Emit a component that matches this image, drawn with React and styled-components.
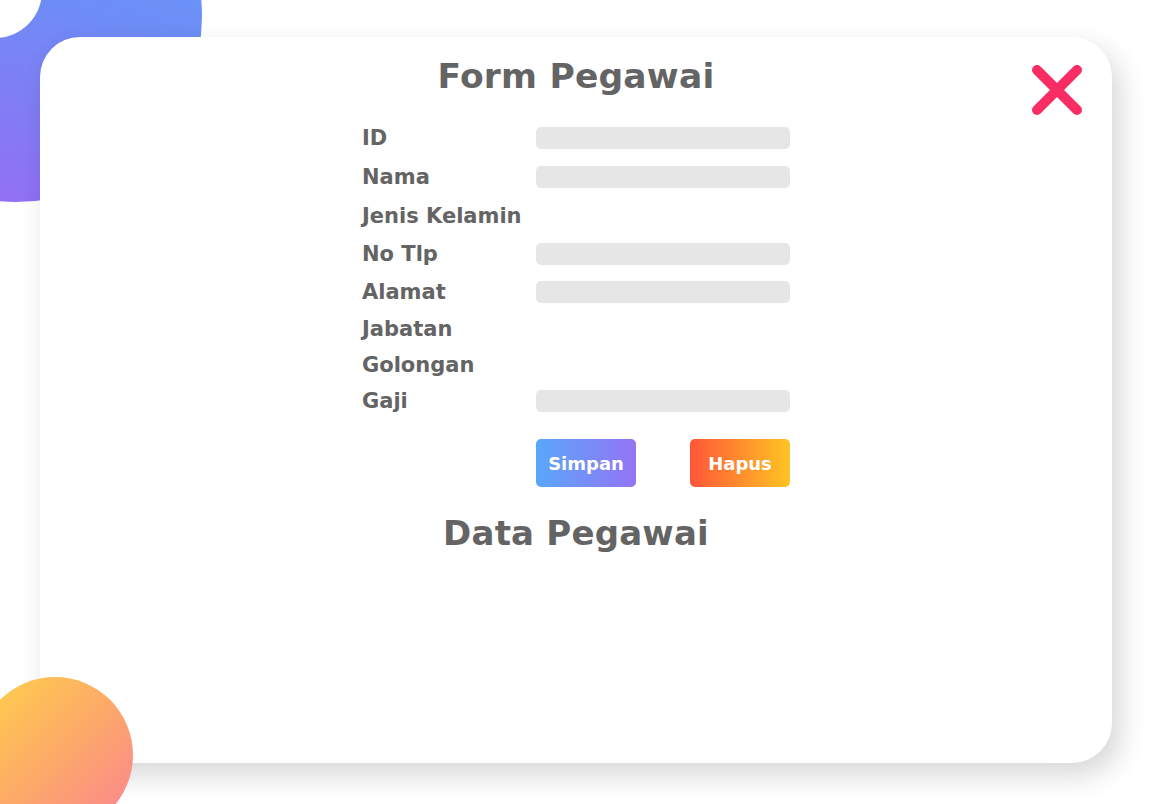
import React from "react";
import styled, { createGlobalStyle } from "styled-components";

const GlobalStyle = createGlobalStyle`
  html, body {
    margin: 0;
    padding: 0;
    background: #ffffff;
  }
  * {
    box-sizing: border-box;
  }
`;

const fields = [
  { label: "ID", h: 39, input: true },
  { label: "Nama", h: 40, input: true },
  { label: "Jenis Kelamin", h: 38 },
  { label: "No Tlp", h: 38, input: true },
  { label: "Alamat", h: 38, input: true },
  { label: "Jabatan", h: 36 },
  { label: "Golongan", h: 36 },
  { label: "Gaji", h: 36, input: true },
];

function App() {
  return (
    <Page>
      <GlobalStyle />
      <BlueBlob />
      <WhiteDot />
      <Card>
        <CloseButton aria-label="close">
          <svg width="52" height="52" viewBox="0 0 52 52">
            <path
              d="M6 6 L46 46 M46 6 L6 46"
              stroke="#f72d64"
              strokeWidth="10"
              strokeLinecap="round"
            />
          </svg>
        </CloseButton>
        <Title>Form Pegawai</Title>
        <Form>
          {fields.map((f) => (
            <Row key={f.label} h={f.h}>
              <Label>{f.label}</Label>
              {f.input ? <Input /> : <span />}
            </Row>
          ))}
          <ButtonRow>
            <span />
            <Buttons>
              <Button variant="save">Simpan</Button>
              <Button variant="delete">Hapus</Button>
            </Buttons>
          </ButtonRow>
        </Form>
        <Title second>Data Pegawai</Title>
      </Card>
      <OrangeBlob />
    </Page>
  );
}

export default App;

const Page = styled.div`
  position: relative;
  width: 1153px;
  height: 804px;
  overflow: hidden;
  background: #ffffff;
  padding: 37px 41px 41px 40px;
  font-family: "DejaVu Sans", "Liberation Sans", sans-serif;
`;

const BlueBlob = styled.div`
  position: absolute;
  left: -170px;
  top: -170px;
  width: 372px;
  height: 372px;
  border-radius: 50%;
  background: linear-gradient(200deg, #5f9ffa 0%, #6f8cf6 45%, #9c67f4 100%);
`;

const WhiteDot = styled.div`
  position: absolute;
  left: -52px;
  top: -56px;
  width: 94px;
  height: 94px;
  border-radius: 50%;
  background: #ffffff;
`;

const OrangeBlob = styled.div`
  position: absolute;
  z-index: 2;
  left: -23px;
  top: 677px;
  width: 156px;
  height: 156px;
  border-radius: 50%;
  background: linear-gradient(135deg, #ffd24a 0%, #fca66c 55%, #fb8294 100%);
`;

const Card = styled.div`
  position: relative;
  z-index: 1;
  width: 1072px;
  height: 726px;
  background: #ffffff;
  border-radius: 40px;
  box-shadow: 8px 12px 28px rgba(0, 0, 0, 0.16);
  display: flex;
  flex-direction: column;
  align-items: center;
  padding-top: 16px;
`;

const CloseButton = styled.button`
  position: absolute;
  top: 27px;
  right: 29px;
  width: 52px;
  height: 52px;
  padding: 0;
  border: none;
  background: transparent;
  cursor: pointer;
  display: flex;
`;

const Title = styled.h1`
  margin: ${(p) => (p.second ? "23px 0 0" : "0 0 19px")};
  font-size: ${(p) => (p.second ? "34px" : "34.5px")};
  line-height: 46px;
  font-weight: 700;
  color: #646464;
  letter-spacing: 0.2px;
`;

const Form = styled.div`
  width: 432px;
  display: flex;
  flex-direction: column;
  margin-left: 2px;
`;

const Row = styled.div`
  display: grid;
  grid-template-columns: 175px 254px;
  align-items: center;
  height: ${(p) => p.h}px;
`;

const Label = styled.span`
  font-size: 21px;
  font-weight: 700;
  color: #646464;
  white-space: nowrap;
  padding-left: 1px;
`;

const Input = styled.div`
  height: 22px;
  border-radius: 5px;
  background: #e6e6e6;
`;

const ButtonRow = styled.div`
  display: grid;
  grid-template-columns: 175px 254px;
  margin-top: 20px;
`;

const Buttons = styled.div`
  display: flex;
  justify-content: space-between;
`;

const Button = styled.button`
  width: 100px;
  height: 48px;
  border: none;
  border-radius: 5px;
  color: #ffffff;
  font-family: inherit;
  font-size: 18px;
  font-weight: 700;
  cursor: pointer;
  background: ${(p) =>
    p.variant === "save"
      ? "linear-gradient(90deg, #5aa7fb 0%, #9474f4 100%)"
      : "linear-gradient(90deg, #ff5638 0%, #ffc424 100%)"};
`;
